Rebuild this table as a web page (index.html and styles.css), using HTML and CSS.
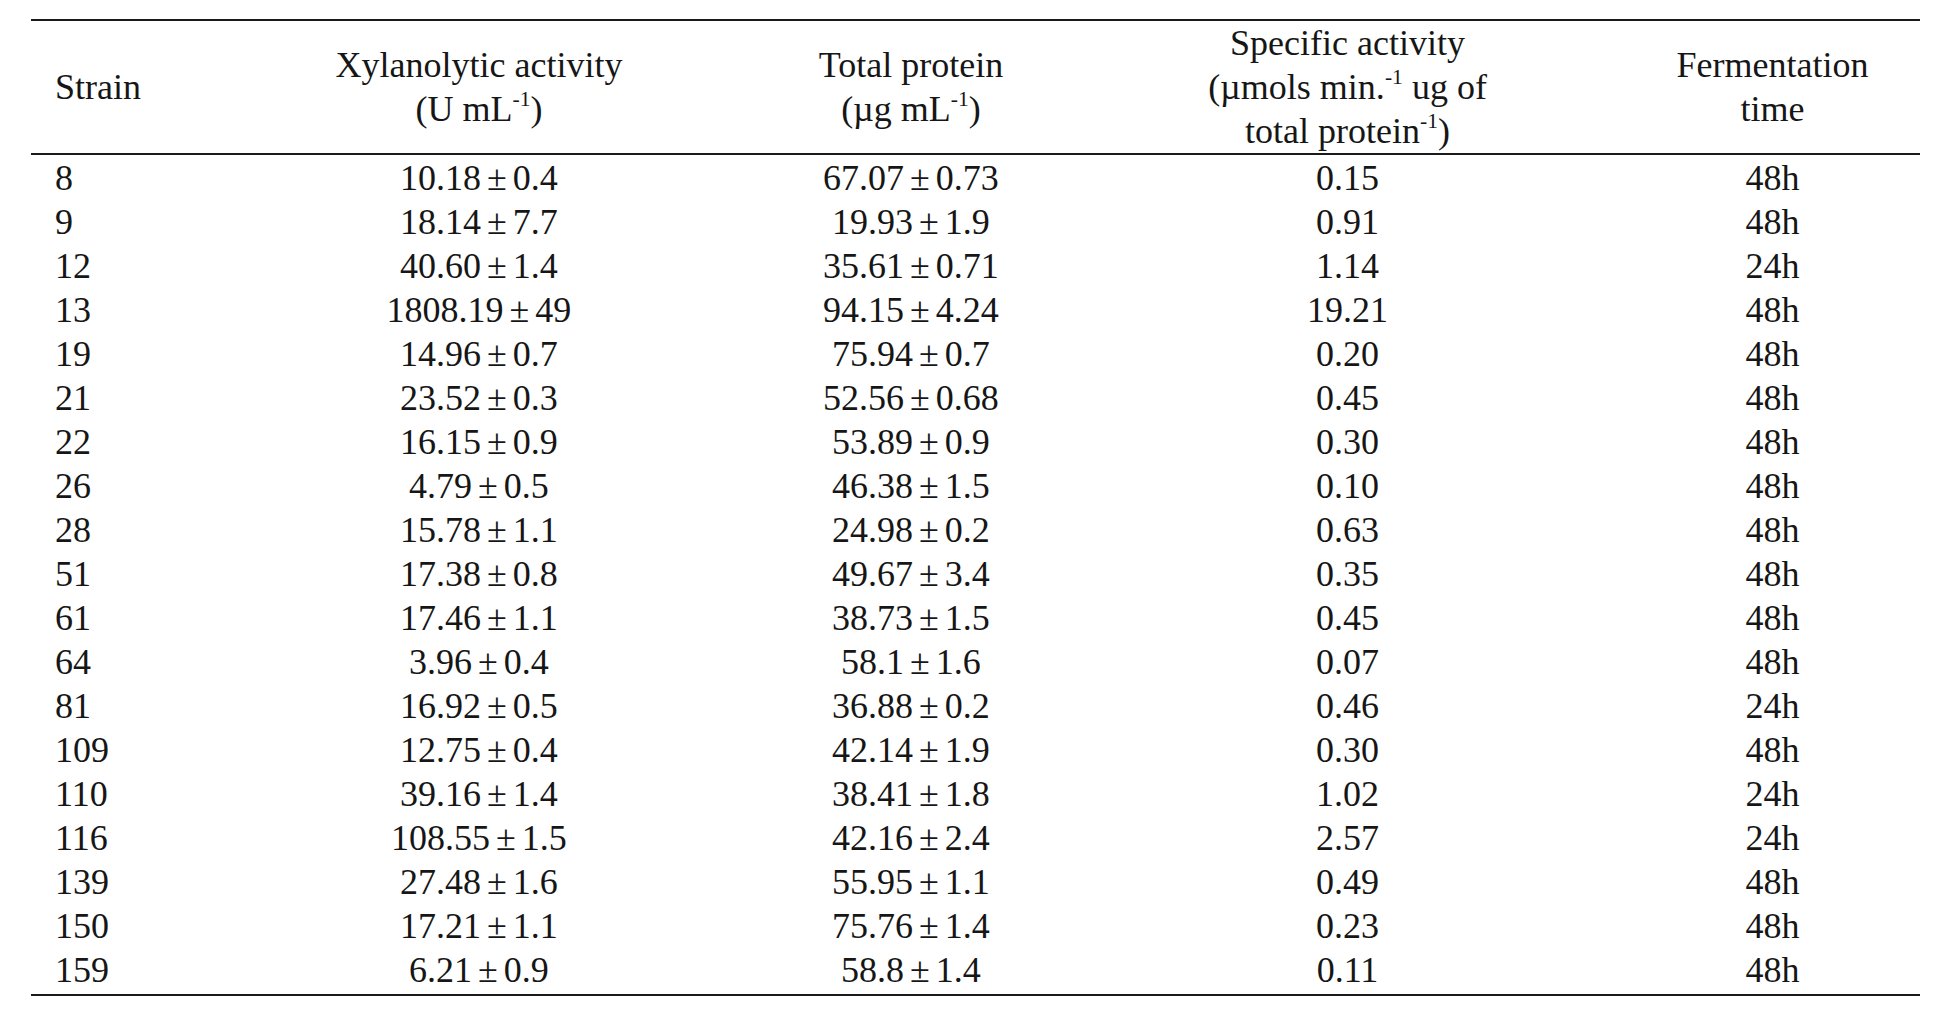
FILE: index.html
```html
<!DOCTYPE html>
<html lang="en">
<head>
<meta charset="utf-8">
<title>Xylanolytic activity</title>
<link rel="stylesheet" href="styles.css">
</head>
<body>
<table class="data">
  <colgroup>
    <col class="c-strain">
    <col class="c-xyl">
    <col class="c-prot">
    <col class="c-spec">
    <col class="c-ferm">
  </colgroup>
  <thead>
    <tr>
      <th class="left">Strain</th>
      <th>Xylanolytic activity<br>(U mL<sup>-1</sup>)</th>
      <th>Total protein<br>(µg mL<sup>-1</sup>)</th>
      <th>Specific activity<br>(µmols min.<sup>-1</sup> ug of<br>total protein<sup>-1</sup>)</th>
      <th>Fermentation<br>time</th>
    </tr>
  </thead>
  <tbody>
    <tr><td class="left">8</td><td>10.18 ± 0.4</td><td>67.07 ± 0.73</td><td>0.15</td><td>48h</td></tr>
    <tr><td class="left">9</td><td>18.14 ± 7.7</td><td>19.93 ± 1.9</td><td>0.91</td><td>48h</td></tr>
    <tr><td class="left">12</td><td>40.60 ± 1.4</td><td>35.61 ± 0.71</td><td>1.14</td><td>24h</td></tr>
    <tr><td class="left">13</td><td>1808.19 ± 49</td><td>94.15 ± 4.24</td><td>19.21</td><td>48h</td></tr>
    <tr><td class="left">19</td><td>14.96 ± 0.7</td><td>75.94 ± 0.7</td><td>0.20</td><td>48h</td></tr>
    <tr><td class="left">21</td><td>23.52 ± 0.3</td><td>52.56 ± 0.68</td><td>0.45</td><td>48h</td></tr>
    <tr><td class="left">22</td><td>16.15 ± 0.9</td><td>53.89 ± 0.9</td><td>0.30</td><td>48h</td></tr>
    <tr><td class="left">26</td><td>4.79 ± 0.5</td><td>46.38 ± 1.5</td><td>0.10</td><td>48h</td></tr>
    <tr><td class="left">28</td><td>15.78 ± 1.1</td><td>24.98 ± 0.2</td><td>0.63</td><td>48h</td></tr>
    <tr><td class="left">51</td><td>17.38 ± 0.8</td><td>49.67 ± 3.4</td><td>0.35</td><td>48h</td></tr>
    <tr><td class="left">61</td><td>17.46 ± 1.1</td><td>38.73 ± 1.5</td><td>0.45</td><td>48h</td></tr>
    <tr><td class="left">64</td><td>3.96 ± 0.4</td><td>58.1 ± 1.6</td><td>0.07</td><td>48h</td></tr>
    <tr><td class="left">81</td><td>16.92 ± 0.5</td><td>36.88 ± 0.2</td><td>0.46</td><td>24h</td></tr>
    <tr><td class="left">109</td><td>12.75 ± 0.4</td><td>42.14 ± 1.9</td><td>0.30</td><td>48h</td></tr>
    <tr><td class="left">110</td><td>39.16 ± 1.4</td><td>38.41 ± 1.8</td><td>1.02</td><td>24h</td></tr>
    <tr><td class="left">116</td><td>108.55 ± 1.5</td><td>42.16 ± 2.4</td><td>2.57</td><td>24h</td></tr>
    <tr><td class="left">139</td><td>27.48 ± 1.6</td><td>55.95 ± 1.1</td><td>0.49</td><td>48h</td></tr>
    <tr><td class="left">150</td><td>17.21 ± 1.1</td><td>75.76 ± 1.4</td><td>0.23</td><td>48h</td></tr>
    <tr><td class="left">159</td><td>6.21 ± 0.9</td><td>58.8 ± 1.4</td><td>0.11</td><td>48h</td></tr>
  </tbody>
</table>
</body>
</html>
```
FILE: styles.css
```css
html, body {
  margin: 0;
  padding: 0;
  background: #ffffff;
}

body {
  padding: 19px 0 0 31px;
  font-family: "Liberation Serif", "Times New Roman", serif;
  font-size: 36px;
  line-height: 44px;
  color: #161616;
}

.data {
  border-collapse: collapse;
  table-layout: fixed;
  width: 1889px;
  border-top: 2px solid #1a1a1a;
  border-bottom: 2px solid #1a1a1a;
}

.c-strain { width: 175px; }
.c-xyl { width: 546px; }
.c-prot { width: 318px; }
.c-spec { width: 555px; }
.c-ferm { width: 295px; }

.data th,
.data td {
  padding: 0;
  font-weight: normal;
  text-align: center;
  white-space: nowrap;
}

.data thead th {
  height: 132px;
  vertical-align: middle;
  border-bottom: 2px solid #1a1a1a;
}

.data td {
  height: 44px;
  word-spacing: -3px;
}

.data tbody tr:first-child td {
  padding-top: 1px;
}

.data tbody tr:last-child td {
  height: 46px;
  vertical-align: top;
}

.data .left {
  text-align: left;
  padding-left: 24px;
}

.data sup {
  font-size: 0.6em;
  line-height: 0;
  vertical-align: 0.7em;
}
```
